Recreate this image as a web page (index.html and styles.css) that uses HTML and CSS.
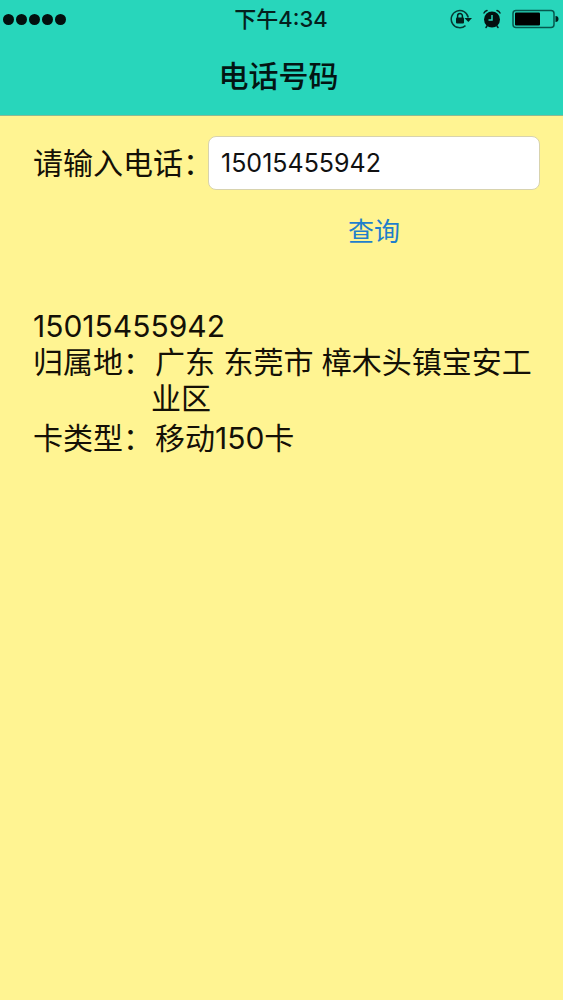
FILE: index.html
```
<!DOCTYPE html>
<html lang="zh-CN">
<head>
    <meta charset="UTF-8">
    <meta name="viewport" content="width=device-width, initial-scale=1">
    <title>电话号码</title>
    <link rel="stylesheet" href="styles.css">
</head>
<body>
    <header class="header">
        <div class="status">
            <div class="signal">
                <span class="dot"></span>
                <span class="dot"></span>
                <span class="dot"></span>
                <span class="dot"></span>
                <span class="dot"></span>
            </div>
            <span class="time">下午4:34</span>
            <div class="status-icons">
                <svg width="22" height="20" viewBox="0 0 22 20">
                    <path d="M15.5 16.6A8.6 8.6 0 1 1 18.3 8.500" fill="none" stroke="#063b35" stroke-width="1.5"/>
                    <path d="M14.5 9h7.5l-3.700 4z" fill="#04201d"/>
                    <rect x="6" y="8.500" width="8" height="6" rx="1" fill="#04201d"/>
                    <path d="M7.600 9V7a2.400 2.400 0 0 1 4.800 0v2" fill="none" stroke="#04201d" stroke-width="1.500"/>
                </svg>
                <svg width="18" height="20" viewBox="0 0 18 20">
                    <circle cx="9" cy="10.500" r="8" fill="#04100f"/>
                    <path d="M1 4Q2 2 4 1.500M17 4Q16 2 14 1.500M4 17l-1 1.500M14 17l1 1.500" fill="none" stroke="#04201d" stroke-width="1.500" stroke-linecap="round"/>
                    <path d="M9 6v5H5.500" fill="none" stroke="#28d6bb" stroke-width="1.500"/>
                </svg>
                <svg width="47" height="20" viewBox="0 0 47 20">
                    <rect x="1" y="1.500" width="41" height="17" rx="3" fill="none" stroke="#06584e" stroke-width="1.500"/>
                    <rect x="3" y="3.500" width="25" height="13" rx="1" fill="#000"/>
                    <path d="M43.500 7a3 3 0 0 1 0 6z" fill="#04201d"/>
                </svg>
            </div>
        </div>
        <h1 class="title">电话号码</h1>
    </header>
    <main class="content">
        <form class="search">
            <div class="field">
                <label class="label" for="phone">请输入电话：</label>
                <input class="input" id="phone" type="tel" value="15015455942">
            </div>
            <button class="query" type="button">查询</button>
        </form>
        <section class="result">
            <p class="number">15015455942</p>
            <div class="row">
                <span class="name">归属地：</span>
                <span class="value">广东 东莞市 樟木头镇宝安工业区</span>
            </div>
            <div class="row">
                <span class="name">卡类型：</span>
                <span class="value">移动150卡</span>
            </div>
        </section>
    </main>
</body>
</html>
```
FILE: styles.css
```
* {
    box-sizing: border-box;
}
body {
    margin: 0;
    min-height: 100vh;
    background: #fff492;
    color: #141006;
    font-family: Inter, "Noto Sans CJK SC", sans-serif;
    font-size: 30px;
    line-height: 36px;
}
.header {
    background: #28d6bb;
    border-bottom: 1px solid #8fb893;
    color: #04201d;
}
.status {
    display: grid;
    grid-template-columns: 1fr auto 1fr;
    align-items: center;
    height: 38px;
    padding: 0 4px 0 3px;
}
.signal {
    display: flex;
    gap: 2px;
}
.dot {
    width: 11px;
    height: 11px;
    border-radius: 50%;
    background: #02100e;
}
.time {
    font-size: 22px;
    font-weight: 500;
    line-height: 38px;
}
.status-icons {
    display: flex;
    justify-content: flex-end;
    gap: 11px;
}
.title {
    margin: 0;
    padding: 20px 6px 20px 0;
    color: #031513;
    font-size: 30px;
    font-weight: 500;
    line-height: 37px;
    text-align: center;
}
.content {
    padding: 20px 23px 20px 33px;
}
.field {
    display: flex;
    align-items: center;
}
.label {
    flex: none;
    width: 175px;
    white-space: nowrap;
}
.input {
    flex: 1;
    min-width: 0;
    height: 54px;
    padding: 0 12px;
    border: 1px solid #d8d3ae;
    border-radius: 8px;
    background: white;
    color: #111;
    font: inherit;
    font-size: 25px;
    outline: 0;
}
.search {
    margin-bottom: 58px;
}
.query {
    display: block;
    margin: 24px 0 0 315px;
    padding: 0;
    border: none;
    background: none;
    color: #1f7fcb;
    font: inherit;
    font-size: 26px;
    line-height: 36px;
    cursor: pointer;
}
.number {
    margin: 0;
}
.row {
    display: flex;
    margin-bottom: 4px;
}
.name {
    flex: none;
    width: 118px;
    white-space: nowrap;
}
.value {
    flex: 1;
    text-indent: 4px;
}
```
